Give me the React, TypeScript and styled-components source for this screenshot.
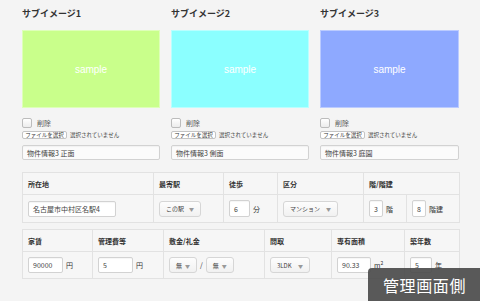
import React from "react";
import styled, { createGlobalStyle } from "styled-components";

const Global = createGlobalStyle`
  html, body { margin: 0; padding: 0; background: #f4f4f4; }
  body { font-family: "Noto Sans CJK JP", "Noto Sans", sans-serif; color: #333; }
  * { box-sizing: border-box; }
`;

const Page = styled.div`
  position: relative;
  width: 480px;
  height: 301px;
  overflow: hidden;
  padding: 8px 21px 0 22px;
  background: #f4f4f4;
`;

const ImageRow = styled.div`
  display: grid;
  grid-template-columns: 138px 138px 139px;
  column-gap: 11px;
`;

const ImageCol = styled.div`
  display: flex;
  flex-direction: column;
`;

const Title = styled.div`
  font-size: 9px;
  line-height: 12px;
  height: 12px;
  font-weight: 700;
  color: #333;
`;

const Sample = styled.div<{ $bg: string }>`
  margin-top: 10px;
  height: 78px;
  background: ${(p) => p.$bg};
  border: 1px solid rgba(255, 255, 255, 0.4);
  display: flex;
  align-items: center;
  justify-content: center;
  color: #fff;
  font-family: "Liberation Sans", Arial, sans-serif;
  font-size: 10px;
`;

const CheckRow = styled.label`
  margin-top: 10px;
  height: 10px;
  display: flex;
  align-items: center;
  gap: 5px;
  font-size: 7px;
  color: #555;
`;

const Check = styled.span`
  width: 10px;
  height: 10px;
  border: 1px solid #bcbcbc;
  border-radius: 2px;
  background: linear-gradient(#ffffff, #ececec);
`;

const FileRow = styled.div`
  margin-top: 2px;
  height: 9px;
  display: flex;
  align-items: center;
  gap: 3px;
  font-size: 5.5px;
  color: #444;
`;

const FileButton = styled.span`
  height: 8px;
  width: 45px;
  border: 1px solid #c4c4c4;
  border-radius: 2px;
  background: #fff;
  display: flex;
  align-items: center;
  justify-content: center;
  font-size: 5.5px;
  color: #333;
`;

const TextBox = styled.div<{ $w?: number; $h?: number }>`
  height: ${(p) => p.$h ?? 16}px;
  width: ${(p) => (p.$w ? `${p.$w}px` : "auto")};
  border: 1px solid #d2d2d2;
  border-radius: 2px;
  background: #fff;
  display: flex;
  align-items: center;
  padding-left: 4px;
  font-size: 7px;
  color: #444;
  box-shadow: inset 0 1px 1px rgba(0, 0, 0, 0.04);
`;

const CaptionBox = styled(TextBox)`
  margin-top: 6px;
  height: 15px;
  background: #fbfbfb;
`;

const Table = styled.table<{ $mt: number }>`
  margin-top: ${(p) => p.$mt}px;
  width: 437px;
  border-collapse: collapse;
  table-layout: fixed;
  background: #f6f6f6;
`;

const Th = styled.th`
  height: 22px;
  border: 1px solid #e2e2e2;
  text-align: left;
  padding: 0 0 0 5px;
  font-size: 7px;
  font-weight: 700;
  color: #333;
`;

const Td = styled.td<{ $h: number }>`
  height: ${(p) => p.$h}px;
  border: 1px solid #e2e2e2;
  padding: 0 0 0 5px;
  font-size: 7px;
  color: #333;
  vertical-align: middle;
`;

const Inline = styled.div`
  display: flex;
  align-items: center;
  gap: 3px;
`;

const Select = styled.div<{ $w: number }>`
  width: ${(p) => p.$w}px;
  height: 16px;
  border: 1px solid #d6d6d6;
  border-radius: 3px;
  background: linear-gradient(#fdfdfd, #f1f1f1);
  display: flex;
  align-items: center;
  justify-content: space-between;
  padding: 0 6px;
  font-size: 6px;
  color: #444;
`;

const Caret = styled.span`
  font-size: 5px;
  color: #999;
`;

const Unit = styled.span`
  font-size: 7px;
  color: #333;
`;

const Sup = styled.sup`
  font-size: 5px;
`;

const Badge = styled.div`
  position: absolute;
  right: 0;
  bottom: 0;
  width: 112px;
  height: 33px;
  background: rgba(72, 72, 72, 0.9);
  border-top-left-radius: 4px;
  color: #fff;
  font-size: 16px;
  letter-spacing: 0.6px;
  display: flex;
  align-items: center;
  padding-left: 15px;
`;

const images = [
  { title: "サブイメージ1", bg: "#c9ff8b", caption: "物件情報3 正面" },
  { title: "サブイメージ2", bg: "#8bffff", caption: "物件情報3 側面" },
  { title: "サブイメージ3", bg: "#8ea9ff", caption: "物件情報3 庭園" },
];

const Sel = ({ w, label }: { w: number; label: string }) => (
  <Select $w={w}>
    <span>{label}</span>
    <Caret>▼</Caret>
  </Select>
);

export default function App() {
  return (
    <>
      <Global />
      <Page>
        <ImageRow>
          {images.map((im) => (
            <ImageCol key={im.title}>
              <Title>{im.title}</Title>
              <Sample $bg={im.bg}>sample</Sample>
              <CheckRow>
                <Check />
                削除
              </CheckRow>
              <FileRow>
                <FileButton>ファイルを選択</FileButton>
                選択されていません
              </FileRow>
              <CaptionBox>{im.caption}</CaptionBox>
            </ImageCol>
          ))}
        </ImageRow>

        <Table $mt={12}>
          <colgroup>
            <col style={{ width: 131 }} />
            <col style={{ width: 70 }} />
            <col style={{ width: 54 }} />
            <col style={{ width: 86 }} />
            <col style={{ width: 43 }} />
            <col style={{ width: 53 }} />
          </colgroup>
          <thead>
            <tr>
              <Th>所在地</Th>
              <Th>最寄駅</Th>
              <Th>徒歩</Th>
              <Th>区分</Th>
              <Th colSpan={2}>階/階建</Th>
            </tr>
          </thead>
          <tbody>
            <tr>
              <Td $h={28}>
                <TextBox $w={88}>名古屋市中村区名駅4</TextBox>
              </Td>
              <Td $h={28}>
                <Sel w={42} label="この駅" />
              </Td>
              <Td $h={28}>
                <Inline>
                  <TextBox $w={21} $h={17}>6</TextBox>
                  <Unit>分</Unit>
                </Inline>
              </Td>
              <Td $h={28}>
                <Sel w={55} label="マンション" />
              </Td>
              <Td $h={28}>
                <Inline>
                  <TextBox $w={14} $h={17}>3</TextBox>
                  <Unit>階</Unit>
                </Inline>
              </Td>
              <Td $h={28}>
                <Inline>
                  <TextBox $w={14} $h={17}>8</TextBox>
                  <Unit>階建</Unit>
                </Inline>
              </Td>
            </tr>
          </tbody>
        </Table>

        <Table $mt={6}>
          <colgroup>
            <col style={{ width: 70 }} />
            <col style={{ width: 71 }} />
            <col style={{ width: 101 }} />
            <col style={{ width: 67 }} />
            <col style={{ width: 73 }} />
            <col style={{ width: 55 }} />
          </colgroup>
          <thead>
            <tr>
              <Th>家賃</Th>
              <Th>管理費等</Th>
              <Th>敷金/礼金</Th>
              <Th>間取</Th>
              <Th>専有面積</Th>
              <Th>築年数</Th>
            </tr>
          </thead>
          <tbody>
            <tr>
              <Td $h={27}>
                <Inline>
                  <TextBox $w={35}>90000</TextBox>
                  <Unit>円</Unit>
                </Inline>
              </Td>
              <Td $h={27}>
                <Inline>
                  <TextBox $w={35}>5</TextBox>
                  <Unit>円</Unit>
                </Inline>
              </Td>
              <Td $h={27}>
                <Inline>
                  <Sel w={28} label="無" />
                  <Unit>/</Unit>
                  <Sel w={28} label="無" />
                </Inline>
              </Td>
              <Td $h={27}>
                <Sel w={40} label="3LDK" />
              </Td>
              <Td $h={27}>
                <Inline>
                  <TextBox $w={34}>90.33</TextBox>
                  <Unit>
                    m<Sup>2</Sup>
                  </Unit>
                </Inline>
              </Td>
              <Td $h={27}>
                <Inline>
                  <TextBox $w={22}>5</TextBox>
                  <Unit>年</Unit>
                </Inline>
              </Td>
            </tr>
          </tbody>
        </Table>

        <Badge>管理画面側</Badge>
      </Page>
    </>
  );
}
